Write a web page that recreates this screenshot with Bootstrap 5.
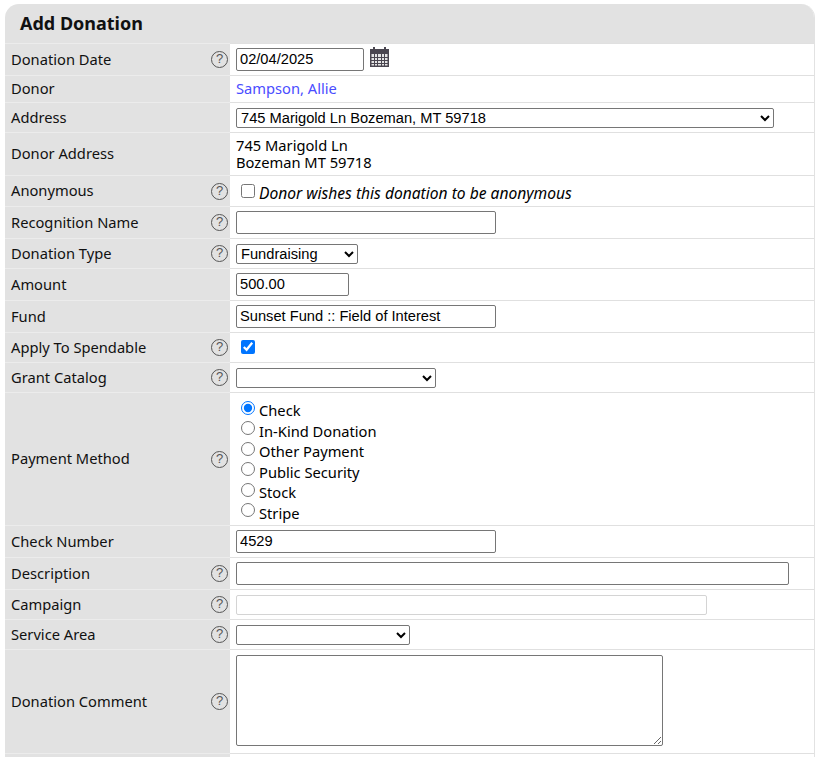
<!DOCTYPE html>
<html lang="en">
<head>
<meta charset="UTF-8" />
<title>Add Donation</title>
<link href="https://cdn.jsdelivr.net/npm/bootstrap@5.3.3/dist/css/bootstrap.min.css" rel="stylesheet" />
<style>
    body { background: #fff; color: #000; font-family: "Noto Sans", "Open Sans", sans-serif; font-size: 14.7px; line-height: 17px; padding: 4px 5px 0; overflow: hidden; height: 757px; }
    .panel { border-right: 1px solid #e2e2e2; border-radius: 14px 14px 0 0; overflow: hidden; }
    .panel-title { background: #e2e2e2; height: 39px; margin: 0; padding: 0 15px; font-family: "Noto Sans", sans-serif; font-size: 18px; font-weight: 700; line-height: 39px; color: #111; }
    .form-table { width: 100%; table-layout: fixed; border-collapse: collapse; margin: 0; }
    .form-table td { border-top: 1px solid #e0e0e0; padding: 0 6px; vertical-align: middle; }
    .form-table td.lbl { width: 225px; background: #e2e2e2; padding: 0 2px 1px 6px; border-top-color: #ececec; color: #111; }
    .form-table td.txt { padding-bottom: 1px; }
    .help { width: 17px; height: 17px; margin-top: 1px; border: 1.5px solid #555; border-radius: 50%; color: #555; font-size: 13px; line-height: 14px; text-align: center; font-family: "Liberation Sans", sans-serif; flex: none; }
    .fld { display: block; height: 23px; padding: 0 3px 1px; border: 1px solid #767676; border-radius: 2px; background: #fff; font-family: "Liberation Sans", sans-serif; font-size: 14.67px; color: #000; }
    select.fld { height: 20px; padding: 0 0 1px; }
    .fld.off { border-color: #d4d4d4; height: 20px; }
    textarea.fld { height: 91px; margin-bottom: 2px; resize: both; }
    .r-27 td { height: 27px; } .r-30 td { height: 30px; } .r-31 td { height: 31px; } .r-32 td { height: 32px; }
    .r-43 td { height: 43px; } .r-104 td { height: 104px; } .r-133 td { height: 133px; }
    .w-128 { width: 128px; } .w-113 { width: 113px; } .w-122 { width: 122px; } .w-174 { width: 174px; } .w-200 { width: 200px; }
    .w-260 { width: 260px; } .w-427 { width: 427px; } .w-471 { width: 471px; } .w-538 { width: 538px; } .w-553 { width: 553px; }
    .donor-link { color: #4a4dff; text-decoration: none; }
    .opt { margin: 0 0 0 5px; width: 14px; height: 14px; flex: none; }
    .opt.d-block { margin-bottom: 2px; }
    .opt-row { gap: 4px; height: 20.6px; }
    .opt-row label { line-height: 20px; padding-top: 5px; }
    .note { font-style: italic; font-size: 15.6px; padding-top: 5px; }
    .cal { margin-bottom: 5px; margin-left: 6px; }
</style>
</head>
<body>
<div class="panel">
    <h1 class="panel-title">Add Donation</h1>
    <table class="form-table">
        <tbody>
            <tr class="r-32">
                <td class="lbl"><div class="d-flex justify-content-between align-items-center">Donation Date<span class="help">?</span></div></td>
                <td><div class="d-flex align-items-center"><input class="fld w-128" type="text" value="02/04/2025" />
                    <svg class="cal" width="19" height="20" viewBox="0 0 19 20"><path fill="#4a4650" d="M3 0h2v2h9V0h2v2h3v18H0V2h3z"/><path fill="#e4e4e4" d="M1.500 7h16v11.500h-16z"/><path stroke="#4a4650" stroke-width="1" d="M1 10.500h17M1 13.500h17M1 16.500h17M4.500 7v12M7.500 7v12M11.500 7v12M14.500 7v12"/></svg></div></td>
            </tr>
            <tr class="r-27">
                <td class="lbl">Donor</td>
                <td class="txt"><a class="donor-link" href="#">Sampson, Allie</a></td>
            </tr>
            <tr class="r-30">
                <td class="lbl">Address</td>
                <td><select class="fld w-538"><option>745 Marigold Ln Bozeman, MT 59718</option></select></td>
            </tr>
            <tr class="r-43">
                <td class="lbl">Donor Address</td>
                <td class="txt">745 Marigold Ln<br />Bozeman MT 59718</td>
            </tr>
            <tr class="r-31">
                <td class="lbl"><div class="d-flex justify-content-between align-items-center">Anonymous<span class="help">?</span></div></td>
                <td><div class="d-flex align-items-center"><input class="opt" type="checkbox" /><span class="note ms-1">Donor wishes this donation to be anonymous</span></div></td>
            </tr>
            <tr class="r-32">
                <td class="lbl"><div class="d-flex justify-content-between align-items-center">Recognition Name<span class="help">?</span></div></td>
                <td><input class="fld w-260" type="text" /></td>
            </tr>
            <tr class="r-30">
                <td class="lbl"><div class="d-flex justify-content-between align-items-center">Donation Type<span class="help">?</span></div></td>
                <td><select class="fld w-122"><option>Fundraising</option></select></td>
            </tr>
            <tr class="r-32">
                <td class="lbl">Amount</td>
                <td><input class="fld w-113" type="text" value="500.00" /></td>
            </tr>
            <tr class="r-32">
                <td class="lbl">Fund</td>
                <td><input class="fld w-260" type="text" value="Sunset Fund :: Field of Interest" /></td>
            </tr>
            <tr class="r-30">
                <td class="lbl"><div class="d-flex justify-content-between align-items-center">Apply To Spendable<span class="help">?</span></div></td>
                <td><input class="opt d-block" type="checkbox" checked /></td>
            </tr>
            <tr class="r-30">
                <td class="lbl"><div class="d-flex justify-content-between align-items-center">Grant Catalog<span class="help">?</span></div></td>
                <td><select class="fld w-200"><option></option></select></td>
            </tr>
            <tr class="r-133">
                <td class="lbl"><div class="d-flex justify-content-between align-items-center">Payment Method<span class="help">?</span></div></td>
                <td>
                    <div class="d-flex align-items-center opt-row"><input class="opt" type="radio" name="pay" id="p1" checked /><label for="p1">Check</label></div>
                    <div class="d-flex align-items-center opt-row"><input class="opt" type="radio" name="pay" id="p2" /><label for="p2">In-Kind Donation</label></div>
                    <div class="d-flex align-items-center opt-row"><input class="opt" type="radio" name="pay" id="p3" /><label for="p3">Other Payment</label></div>
                    <div class="d-flex align-items-center opt-row"><input class="opt" type="radio" name="pay" id="p4" /><label for="p4">Public Security</label></div>
                    <div class="d-flex align-items-center opt-row"><input class="opt" type="radio" name="pay" id="p5" /><label for="p5">Stock</label></div>
                    <div class="d-flex align-items-center opt-row"><input class="opt" type="radio" name="pay" id="p6" /><label for="p6">Stripe</label></div>
                </td>
            </tr>
            <tr class="r-32">
                <td class="lbl">Check Number</td>
                <td><input class="fld w-260" type="text" value="4529" /></td>
            </tr>
            <tr class="r-32">
                <td class="lbl"><div class="d-flex justify-content-between align-items-center">Description<span class="help">?</span></div></td>
                <td><input class="fld w-553" type="text" /></td>
            </tr>
            <tr class="r-30">
                <td class="lbl"><div class="d-flex justify-content-between align-items-center">Campaign<span class="help">?</span></div></td>
                <td><input class="fld off w-471" type="text" /></td>
            </tr>
            <tr class="r-30">
                <td class="lbl"><div class="d-flex justify-content-between align-items-center">Service Area<span class="help">?</span></div></td>
                <td><select class="fld w-174"><option></option></select></td>
            </tr>
            <tr class="r-104">
                <td class="lbl"><div class="d-flex justify-content-between align-items-center">Donation Comment<span class="help">?</span></div></td>
                <td><textarea class="fld w-427"></textarea></td>
            </tr>
            <tr class="r-32">
                <td class="lbl"></td>
                <td></td>
            </tr>
        </tbody>
    </table>
</div>
<script src="https://cdn.jsdelivr.net/npm/bootstrap@5.3.3/dist/js/bootstrap.bundle.min.js"></script>
</body>
</html>
